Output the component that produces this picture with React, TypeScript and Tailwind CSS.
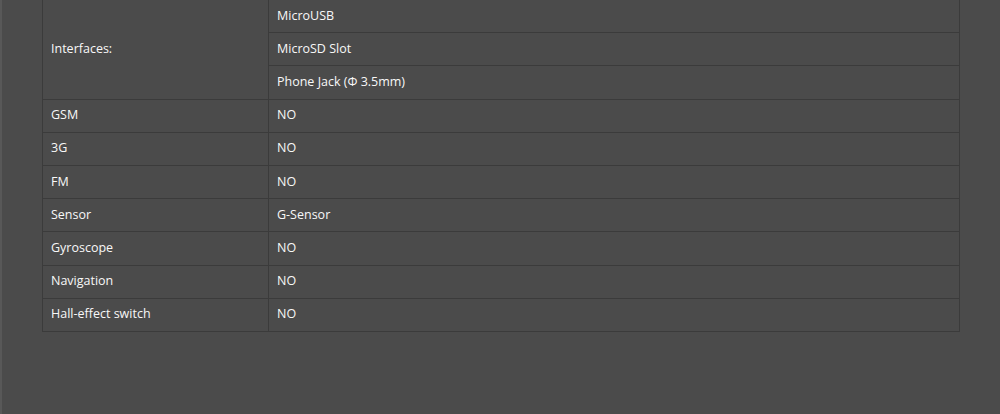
const rows: [string, string][] = [
  ["GSM", "NO"],
  ["3G", "NO"],
  ["FM", "NO"],
  ["Sensor", "G-Sensor"],
  ["Gyroscope", "NO"],
  ["Navigation", "NO"],
  ["Hall-effect switch", "NO"],
];

const interfaces = ["MicroUSB", "MicroSD Slot", "Phone Jack (Φ 3.5mm)"];

export default function App() {
  return (
    <div
      className="h-[414px] w-[1000px] overflow-hidden bg-[#4b4b4b] border-l-2 border-[#585858] text-[12.5px] text-[#f8f8f8]"
      style={{ fontFamily: '"Open Sans", "Noto Sans", sans-serif' }}
    >
      <div className="pl-[40px] pr-[40px] -mt-px">
        <table className="w-[918px] border-collapse">
          <tbody>
            {interfaces.map((item, i) => (
              <tr key={item} className="h-[33.2px]">
                {i === 0 && (
                  <td
                    rowSpan={3}
                    className="w-[226px] border border-[#3b3b3b] px-[8px] align-middle"
                  >
                    Interfaces:
                  </td>
                )}
                <td className="border border-[#3b3b3b] px-[8px] align-middle">{item}</td>
              </tr>
            ))}
            {rows.map(([k, v]) => (
              <tr key={k} className="h-[33.2px]">
                <td className="border border-[#3b3b3b] px-[8px] align-middle">{k}</td>
                <td className="border border-[#3b3b3b] px-[8px] align-middle">{v}</td>
              </tr>
            ))}
          </tbody>
        </table>
      </div>
    </div>
  );
}
